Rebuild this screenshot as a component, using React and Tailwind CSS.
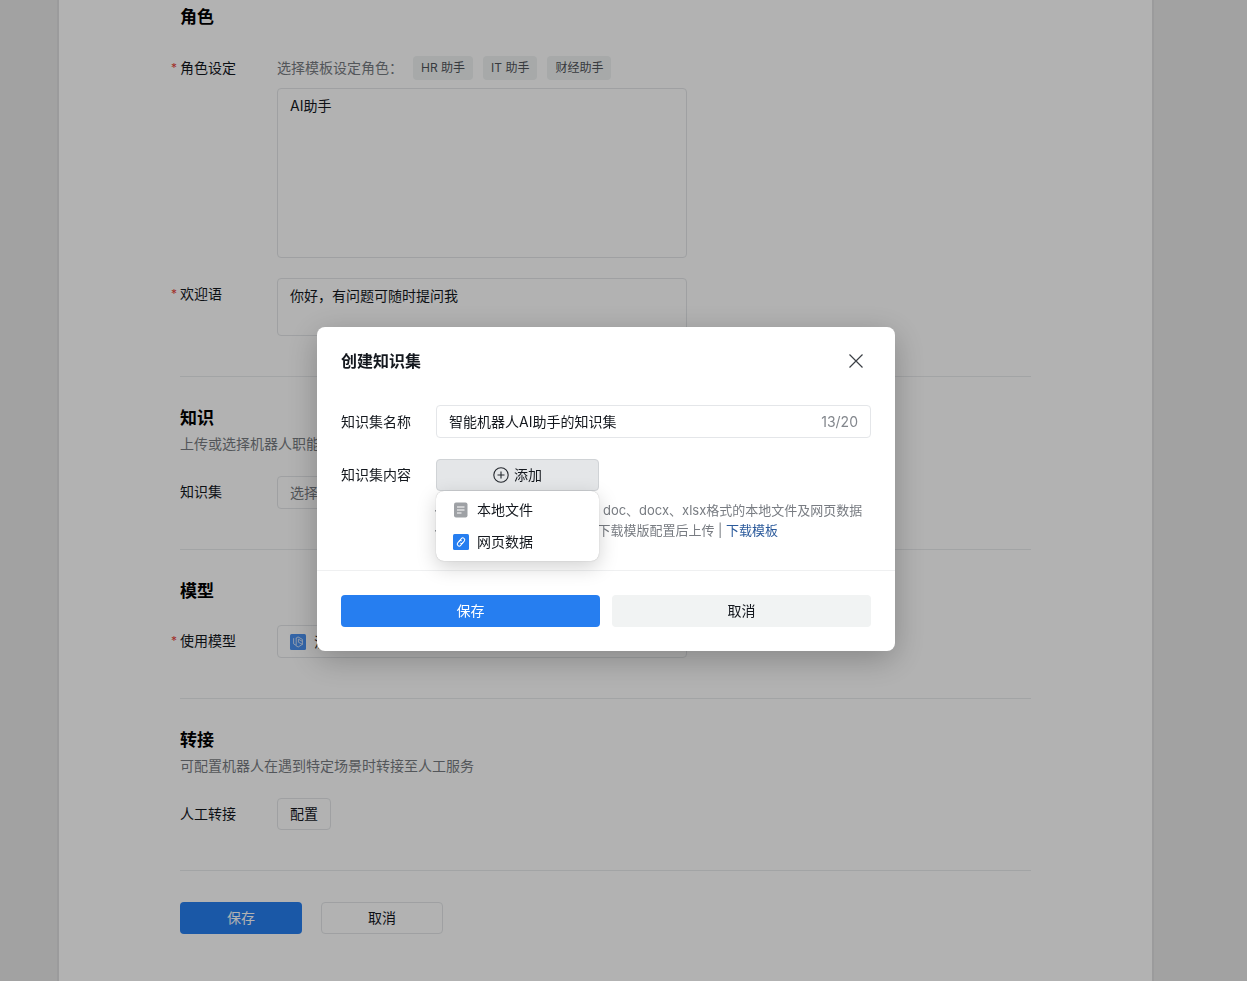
import React, { useState } from 'react';

const templates = ['HR 助手', 'IT 助手', '财经助手'];

function FormRow({ label, htmlFor, required, children }) {
  return (
    <div className="flex items-start">
      <label htmlFor={htmlFor} className="-ml-[9px] flex w-[106px] shrink-0 pt-[6px] leading-5">
        <span className="w-[9px] text-xs leading-5 text-[#e8463c]">{required ? '*' : ''}</span>
        {label}
      </label>
      <div className="w-full max-w-[410px]">{children}</div>
    </div>
  );
}

function Section({ title, desc, children }) {
  return (
    <section className="border-b border-[#e9ebed] pt-[29px] pb-10">
      <h2 className="text-[17px] leading-6 font-bold text-black">{title}</h2>
      {desc && <p className="mt-1 leading-5 text-[#787c82]">{desc}</p>}
      <div className="mt-[22px]">{children}</div>
    </section>
  );
}

function FileIcon() {
  return (
    <svg width="16" height="16" viewBox="0 0 16 16" fill="none">
      <rect x="1" y="0.5" width="13.5" height="15" rx="2" fill="#9ea1a5" />
      <path d="M4 5h7.5M4 8h7.5M4 11h4.5" stroke="#fff" strokeWidth="1.1" />
    </svg>
  );
}

function LinkIcon() {
  return (
    <svg width="16" height="16" viewBox="0 0 16 16" fill="none">
      <rect width="16" height="16" rx="1.5" fill="#267ef0" />
      <g transform="rotate(-50 8 8)" stroke="#fff" strokeWidth="1" strokeLinecap="round">
        <path d="M8.6 9.9H5.2a1.9 1.9 0 0 1 0-3.8h2.3a1.9 1.9 0 0 1 1.8 1.6" />
        <path d="M7.4 6.1h3.4a1.9 1.9 0 0 1 0 3.8H8.5a1.9 1.9 0 0 1-1.8-1.6" />
      </g>
    </svg>
  );
}

function ModelIcon() {
  return (
    <svg width="16" height="16" viewBox="0 0 16 16" fill="none" className="shrink-0">
      <rect width="16" height="16" rx="1.5" fill="#4a92f2" />
      <g stroke="#dce9fc" strokeWidth="0.9" strokeLinecap="round" strokeLinejoin="round">
        <path d="M3.6 4.6v5.2l2.6 1.6V4.2" />
        <path d="M6.2 4.2 8 2.9l4.4 2.5v2L8.4 5.2v3l4 2.1-4.2 2.7-2-1.2" />
        <path d="M12.4 7.4v2.9" />
      </g>
    </svg>
  );
}

function PlusIcon() {
  return (
    <svg width="16" height="16" viewBox="0 0 16 16" fill="none" stroke="#24282e" strokeWidth="1.1">
      <circle cx="8" cy="8" r="7.2" />
      <path d="M8 4.5v7M4.5 8h7" />
    </svg>
  );
}

function CreateModal() {
  const [name, setName] = useState('智能机器人AI助手的知识集');

  return (
    <div className="fixed inset-0 flex items-center justify-center bg-black/30 pr-[35px] pb-[3px]">
      <div
        role="dialog"
        aria-modal="true"
        aria-labelledby="modal-title"
        className="w-full max-w-[578px] rounded-lg bg-white shadow-[0_8px_32px_rgba(0,0,0,0.25)]"
      >
        <div className="flex items-center justify-between px-6 pt-6">
          <h3 id="modal-title" className="text-base leading-5 font-bold">创建知识集</h3>
          <button type="button" aria-label="关闭" className="mr-2">
            <svg width="14" height="14" viewBox="0 0 14 14" stroke="#3b3f45" strokeWidth="1.2">
              <path d="M.5.5l13 13M13.5.5l-13 13" />
            </svg>
          </button>
        </div>

        <div className="flex flex-col gap-[21px] px-6 pt-[34px] pb-[30px]">
          {/* Name */}
          <div className="flex items-center">
            <label htmlFor="setName" className="w-[95px] shrink-0">知识集名称</label>
            <div className="flex h-[33px] min-w-0 flex-1 items-center rounded border border-[#e4e6e9] px-3">
              <input
                id="setName"
                type="text"
                value={name}
                onChange={(e) => setName(e.target.value)}
                className="min-w-0 flex-1 outline-none"
              />
              <span className="text-[#83878d]">13/20</span>
            </div>
          </div>

          {/* Content */}
          <div className="flex items-start">
            <span className="w-[95px] shrink-0 pt-[6px] leading-5">知识集内容</span>
            <div className="relative min-w-0 flex-1">
              <button
                type="button"
                className="flex h-8 w-[163px] items-center justify-center gap-[5px] rounded border border-[#d0d3d6] bg-[#e4e6e8]"
              >
                <PlusIcon />
                添加
              </button>
              <ul className="mt-[9px] -ml-[2px] text-[13px] leading-5 whitespace-nowrap text-[#787c82]">
                <li>· 支持上传大小不超过20M的 doc、docx、xlsx格式的本地文件及网页数据</li>
                <li>
                  · 如需批量导入问答内容可先下载模版配置后上传 | <a href="#template" className="text-[#2b5a9b]">下载模板</a>
                </li>
              </ul>
              <div className="absolute top-8 left-0 w-[163px] rounded-lg bg-white py-[3px] shadow-[0_0_1px_rgba(0,0,0,0.3),0_6px_20px_rgba(0,0,0,0.18)]">
                <button type="button" className="flex h-8 w-full items-center gap-2 px-[17px]">
                  <FileIcon />
                  本地文件
                </button>
                <button type="button" className="flex h-8 w-full items-center gap-2 px-[17px]">
                  <LinkIcon />
                  网页数据
                </button>
              </div>
            </div>
          </div>
        </div>

        <div className="flex gap-3 border-t border-[#eff0f1] p-6">
          <button type="button" className="h-8 flex-1 rounded bg-[#267ef0] text-white">保存</button>
          <button type="button" className="h-8 flex-1 rounded bg-[#f1f3f3]">取消</button>
        </div>
      </div>
    </div>
  );
}

function App() {
  const [role, setRole] = useState('AI助手');
  const [welcome, setWelcome] = useState('你好，有问题可随时提问我');

  return (
    <div className="min-h-screen bg-[#e8e8e8] pr-[93px] pl-[57px] font-['Inter','Noto_Sans_CJK_SC',sans-serif] text-sm text-[#14181e]">
      <main className="min-h-screen border-x-2 border-[#dedfe0] bg-white px-[121px] pb-8">
        {/* Role */}
        <section className="border-b border-[#e9ebed] pt-[5px] pb-10">
          <h2 className="text-[17px] leading-6 font-bold text-black">角色</h2>
          <div className="mt-[27px] flex flex-col gap-5">
            <div className="flex items-start">
              <label htmlFor="role" className="-ml-[9px] flex w-[106px] shrink-0 pt-[2px] leading-5">
                <span className="w-[9px] text-xs leading-5 text-[#e8463c]">*</span>
                角色设定
              </label>
              <div className="w-full max-w-[410px]">
                <div className="flex h-6 items-center gap-[10px]">
                  <span className="w-[126px] text-[#787c82]">选择模板设定角色：</span>
                  {templates.map((item) => (
                    <button
                      key={item}
                      type="button"
                      onClick={() => setRole(item)}
                      className="h-6 rounded bg-[#f0f3f3] px-2 text-xs text-[#50545a]"
                    >
                      {item}
                    </button>
                  ))}
                </div>
                <textarea
                  id="role"
                  value={role}
                  onChange={(e) => setRole(e.target.value)}
                  className="mt-2 block h-[170px] w-full resize-none rounded border border-[#e4e6e9] px-3 py-[7px] leading-5"
                />
              </div>
            </div>

            <FormRow label="欢迎语" htmlFor="welcome" required>
              <textarea
                id="welcome"
                value={welcome}
                onChange={(e) => setWelcome(e.target.value)}
                className="block h-[58px] w-full resize-none rounded border border-[#e4e6e9] px-3 py-[7px] leading-5"
              />
            </FormRow>
          </div>
        </section>

        <Section title="知识" desc="上传或选择机器人职能相关的知识">
          <FormRow label="知识集" htmlFor="knowledge">
            <select
              id="knowledge"
              className="block h-[33px] w-full appearance-none rounded border border-[#e4e6e9] px-3 text-[#787c82]"
            >
              <option>选择知识集</option>
            </select>
          </FormRow>
        </Section>

        <Section title="模型">
          <FormRow label="使用模型" htmlFor="model" required>
            <div className="flex h-[33px] items-center gap-2 rounded border border-[#e4e6e9] px-3">
              <ModelIcon />
              <select id="model" className="min-w-0 flex-1 appearance-none">
                <option>混元大模型</option>
              </select>
            </div>
          </FormRow>
        </Section>

        <Section title="转接" desc="可配置机器人在遇到特定场景时转接至人工服务">
          <FormRow label="人工转接" htmlFor="transfer">
            <button id="transfer" type="button" className="block h-8 rounded border border-[#e4e6e9] px-3">
              配置
            </button>
          </FormRow>
        </Section>

        <div className="flex gap-[19px] pt-[31px]">
          <button type="button" className="h-8 w-[122px] rounded bg-[#267ef0] text-white">保存</button>
          <button type="button" className="h-8 w-[122px] rounded border border-[#e4e6e9]">取消</button>
        </div>
      </main>

      <CreateModal />
    </div>
  );
}

export default App;
